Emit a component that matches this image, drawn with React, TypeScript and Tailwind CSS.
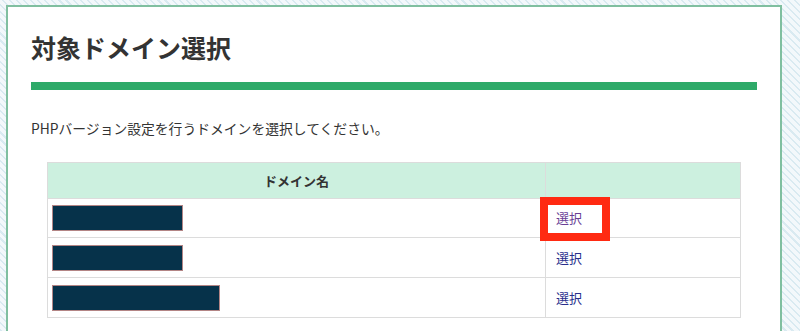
const rows = [
  { w: 'w-[131px]', visited: true },
  { w: 'w-[131px]', visited: false },
  { w: 'w-[168px]', visited: false },
];

export default function App() {
  return (
    <div
      className="h-[331px] overflow-hidden pt-[5px] pl-[6px] pr-[18px] bg-[repeating-linear-gradient(45deg,#d9eaf1_0px,#d9eaf1_1.5px,#f3f8fb_1.5px,#f3f8fb_5px)]"
      style={{ fontFamily: '"Noto Sans CJK JP", "Noto Sans", sans-serif' }}
    >
      <div className="bg-white border-2 border-[#80bfa0] px-[23px] pt-[22px] pb-10 min-h-[400px]">
        <h1 className="text-[25px] leading-[36px] font-bold text-[#333]">対象ドメイン選択</h1>
        <div className="mt-[17px] h-2 bg-[#2eaa69]" />
        <p className="mt-[28px] text-[13.8px] leading-5 text-[#333]">
          PHPバージョン設定を行うドメインを選択してください。
        </p>
        <table className="mt-6 ml-4 w-[694px] border-collapse text-[13px]">
          <thead>
            <tr className="h-[36px] bg-[#ccf0df]">
              <th className="w-[498px] border border-[#dcdcdc] font-bold text-[#333]">ドメイン名</th>
              <th className="border border-[#dcdcdc]" />
            </tr>
          </thead>
          <tbody>
            {rows.map((r, i) => (
              <tr key={i} className={i === 0 ? 'h-[39px]' : 'h-10'}>
                <td className="border border-[#dcdcdc] px-1 align-middle">
                  <div className={`${r.w} h-[26px] bg-[#06324a] border border-[#b38585]`} />
                </td>
                <td className="relative border border-[#dcdcdc] px-[10px] align-middle">
                  <a
                    href="#"
                    className={r.visited ? 'text-[#6a3f96]' : 'text-[#2a2f8c]'}
                  >
                    選択
                  </a>
                  {r.visited && (
                    <div className="absolute left-[-6px] top-[-2px] w-[70px] h-[44px] border-[8px] border-[#ff2a12]" />
                  )}
                </td>
              </tr>
            ))}
          </tbody>
        </table>
      </div>
    </div>
  );
}
